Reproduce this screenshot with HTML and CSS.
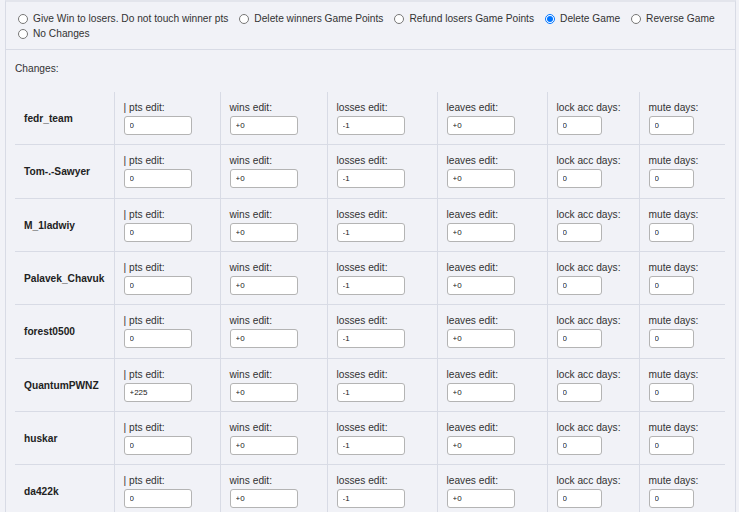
FILE: index.html
```html
<!DOCTYPE html>
<html lang="en">
<head>
  <meta charset="UTF-8">
  <title>Game Changes</title>
  <link rel="stylesheet" href="styles.css">
</head>
<body>

  <div class="panel">
    <!-- GAME ACTION -->
    <div class="actions">
      <label class="opt"><input type="radio" name="action"> Give Win to losers. Do not touch winner pts</label>
      <label class="opt"><input type="radio" name="action"> Delete winners Game Points</label>
      <label class="opt"><input type="radio" name="action"> Refund losers Game Points</label>
      <label class="opt"><input type="radio" name="action" checked> Delete Game</label>
      <label class="opt"><input type="radio" name="action"> Reverse Game</label>
      <label class="opt"><input type="radio" name="action"> No Changes</label>
    </div>

    <!-- PLAYER CHANGES -->
    <div class="changes">
      <div class="changes-title">Changes:</div>
      <table class="players">
        <colgroup>
          <col style="width:99px"><col style="width:106px"><col style="width:107px">
          <col style="width:110px"><col style="width:110px"><col style="width:92px"><col style="width:86px">
        </colgroup>
        <tbody>
          <tr>
            <td class="name">fedr_team</td>
            <td><div class="lbl">| pts edit:</div><input class="num" value="0"></td>
            <td><div class="lbl">wins edit:</div><input class="num" value="+0"></td>
            <td><div class="lbl">losses edit:</div><input class="num" value="-1"></td>
            <td><div class="lbl">leaves edit:</div><input class="num" value="+0"></td>
            <td><div class="lbl">lock acc days:</div><input class="days" value="0"></td>
            <td><div class="lbl">mute days:</div><input class="days" value="0"></td>
          </tr>
          <tr>
            <td class="name">Tom-.-Sawyer</td>
            <td><div class="lbl">| pts edit:</div><input class="num" value="0"></td>
            <td><div class="lbl">wins edit:</div><input class="num" value="+0"></td>
            <td><div class="lbl">losses edit:</div><input class="num" value="-1"></td>
            <td><div class="lbl">leaves edit:</div><input class="num" value="+0"></td>
            <td><div class="lbl">lock acc days:</div><input class="days" value="0"></td>
            <td><div class="lbl">mute days:</div><input class="days" value="0"></td>
          </tr>
          <tr>
            <td class="name">M_1ladwiy</td>
            <td><div class="lbl">| pts edit:</div><input class="num" value="0"></td>
            <td><div class="lbl">wins edit:</div><input class="num" value="+0"></td>
            <td><div class="lbl">losses edit:</div><input class="num" value="-1"></td>
            <td><div class="lbl">leaves edit:</div><input class="num" value="+0"></td>
            <td><div class="lbl">lock acc days:</div><input class="days" value="0"></td>
            <td><div class="lbl">mute days:</div><input class="days" value="0"></td>
          </tr>
          <tr>
            <td class="name">Palavek_Chavuk</td>
            <td><div class="lbl">| pts edit:</div><input class="num" value="0"></td>
            <td><div class="lbl">wins edit:</div><input class="num" value="+0"></td>
            <td><div class="lbl">losses edit:</div><input class="num" value="-1"></td>
            <td><div class="lbl">leaves edit:</div><input class="num" value="+0"></td>
            <td><div class="lbl">lock acc days:</div><input class="days" value="0"></td>
            <td><div class="lbl">mute days:</div><input class="days" value="0"></td>
          </tr>
          <tr>
            <td class="name">forest0500</td>
            <td><div class="lbl">| pts edit:</div><input class="num" value="0"></td>
            <td><div class="lbl">wins edit:</div><input class="num" value="+0"></td>
            <td><div class="lbl">losses edit:</div><input class="num" value="-1"></td>
            <td><div class="lbl">leaves edit:</div><input class="num" value="+0"></td>
            <td><div class="lbl">lock acc days:</div><input class="days" value="0"></td>
            <td><div class="lbl">mute days:</div><input class="days" value="0"></td>
          </tr>
          <tr>
            <td class="name">QuantumPWNZ</td>
            <td><div class="lbl">| pts edit:</div><input class="num" value="+225"></td>
            <td><div class="lbl">wins edit:</div><input class="num" value="+0"></td>
            <td><div class="lbl">losses edit:</div><input class="num" value="-1"></td>
            <td><div class="lbl">leaves edit:</div><input class="num" value="+0"></td>
            <td><div class="lbl">lock acc days:</div><input class="days" value="0"></td>
            <td><div class="lbl">mute days:</div><input class="days" value="0"></td>
          </tr>
          <tr>
            <td class="name">huskar</td>
            <td><div class="lbl">| pts edit:</div><input class="num" value="0"></td>
            <td><div class="lbl">wins edit:</div><input class="num" value="+0"></td>
            <td><div class="lbl">losses edit:</div><input class="num" value="-1"></td>
            <td><div class="lbl">leaves edit:</div><input class="num" value="+0"></td>
            <td><div class="lbl">lock acc days:</div><input class="days" value="0"></td>
            <td><div class="lbl">mute days:</div><input class="days" value="0"></td>
          </tr>
          <tr>
            <td class="name">da422k</td>
            <td><div class="lbl">| pts edit:</div><input class="num" value="0"></td>
            <td><div class="lbl">wins edit:</div><input class="num" value="+0"></td>
            <td><div class="lbl">losses edit:</div><input class="num" value="-1"></td>
            <td><div class="lbl">leaves edit:</div><input class="num" value="+0"></td>
            <td><div class="lbl">lock acc days:</div><input class="days" value="0"></td>
            <td><div class="lbl">mute days:</div><input class="days" value="0"></td>
          </tr>
        </tbody>
      </table>
    </div>
  </div>

</body>
</html>
```

FILE: styles.css
```css
body {
  margin: 0;
  padding: 0;
  background: #f1f2f7;
  font-family: "Liberation Sans", Arial, sans-serif;
  font-size: 10.2px;
  color: #333;
}

.panel {
  box-sizing: border-box;
  width: 731px;
  min-height: 512px;
  margin-left: 5px;
  border-top: 2px solid #e3e5ec;
  border-left: 1px solid #d8dbe5;
  border-right: 1px solid #d8dbe5;
}

/* radio options */
.actions {
  display: flex;
  flex-wrap: wrap;
  column-gap: 11px;
  padding: 9px 12px 8px 12px;
  border-bottom: 1px solid #d8dbe5;
  line-height: 15px;
}

.opt {
  display: inline-flex;
  align-items: center;
  gap: 5px;
  white-space: nowrap;
}

.opt input {
  width: 10px;
  height: 10px;
  margin: 0;
}

/* changes table */
.changes {
  padding: 13px 10px 0 9px;
}

.changes-title {
  line-height: 12px;
  margin-bottom: 17px;
}

.players {
  width: 710px;
  table-layout: fixed;
  border-collapse: collapse;
}

.players td {
  padding: 10px 9px 9.33px 9px;
  vertical-align: top;
}

.players tr + tr td {
  border-top: 1px solid #d8dbe5;
}

.players td + td {
  border-left: 1px solid #d8dbe5;
}

.players td.name {
  vertical-align: middle;
  font-weight: bold;
  color: #222;
  white-space: nowrap;
}

.lbl {
  line-height: 12px;
  margin-bottom: 2px;
  white-space: nowrap;
}

.players input {
  display: block;
  box-sizing: border-box;
  height: 19px;
  padding: 0 5px;
  border: 1px solid #b4b4b4;
  border-radius: 3px;
  background: #fff;
  font-family: "Liberation Sans", Arial, sans-serif;
  font-size: 8px;
  color: #222;
}

.num {
  width: 68px;
}

.days {
  width: 45px;
}
```
